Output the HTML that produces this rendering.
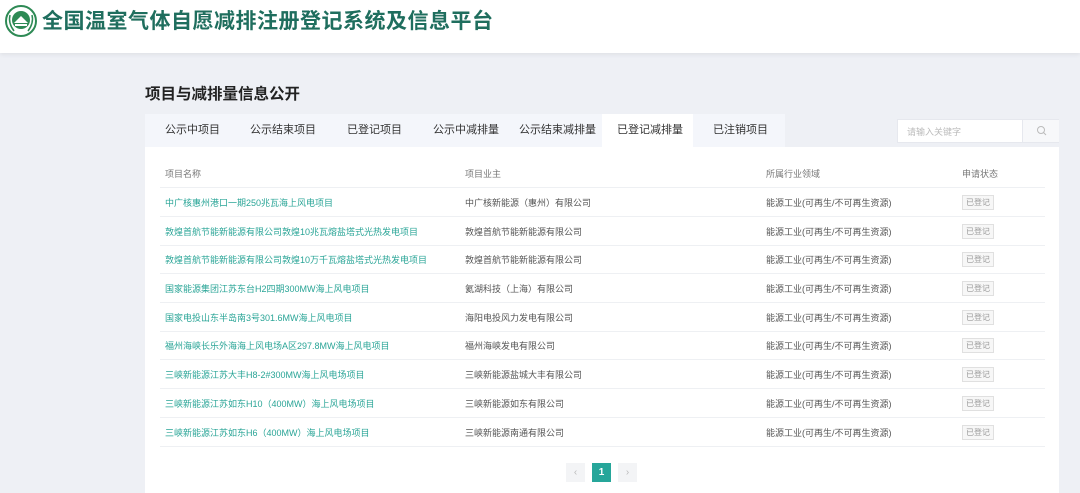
<!DOCTYPE html>
<html><head><meta charset="utf-8"><style>
*{margin:0;padding:0;box-sizing:border-box}
body{width:1080px;height:493px;overflow:hidden;background:#eef0f5;font-family:"Liberation Sans","Noto Sans CJK SC",sans-serif;position:relative}
.hdr{position:absolute;left:0;top:0;width:1080px;height:53px;background:#fff;box-shadow:0 2px 4px rgba(0,0,0,.06)}
.hdr .t{position:absolute;left:42px;top:8px;font-size:21px;font-weight:bold;color:#1f6e5e;letter-spacing:0.5px;line-height:28px}
.title{position:absolute;left:145px;top:82px;font-size:15.5px;font-weight:bold;color:#222}
.tabs{position:absolute;left:145px;top:114px;width:640px;height:33px;background:#f4f6fb}
.tab{position:absolute;top:0;height:33px;line-height:33px;font-size:11px;color:#333}
.tab.act{background:#fff}
.search{position:absolute;left:897px;top:119px;width:162px;height:24px;background:#fff;border:1px solid #e6e8ee}
.search span{position:absolute;left:9px;top:5px;font-size:9px;color:#bbb}
.search .b{position:absolute;left:124px;top:0;width:37px;height:22px;background:#f7f8fa;border-left:1px solid #e6e8ee}
.card{position:absolute;left:145px;top:147px;width:914px;height:346px;background:#fff}
.row{position:absolute;left:15px;width:885px;height:29px;border-bottom:1px solid #eef0f3;font-size:9px;color:#555}
.row div{position:absolute;top:8px;white-space:nowrap}
.c1{left:5px}.c2{left:305px}.c3{left:606px}.c4{left:802px}
.row.h div{color:#777}
.lnk{color:#2aa597}
.tag{border:1px solid #e0e0e0;background:#f7f7f7;color:#999;font-size:8px;padding:1px 3px;top:7px!important}
.pg{position:absolute;top:463px;width:19px;height:19px;background:#f3f4f6;color:#bbb;font-size:10px;text-align:center;line-height:19px}
</style></head><body>
<div class="hdr">
<svg style="position:absolute;left:5px;top:5px" width="32" height="32" viewBox="0 0 32 32"><circle cx="16" cy="16" r="15" fill="#fff" stroke="#2e8a55" stroke-width="2"/><circle cx="16" cy="15" r="9" fill="#2e8a55"/><path d="M9 18 L16 11 L23 18 Z" fill="#fff"/><rect x="10" y="19" width="12" height="2" fill="#fff"/><path d="M5 10 Q3 18 9 26 M27 10 Q29 18 23 26" stroke="#2e8a55" fill="none" stroke-width="1.5"/></svg>
<div class="t">全国温室气体自愿减排注册登记系统及信息平台</div>
</div>
<div class="title">项目与减排量信息公开</div>
<div class="tabs">
<div class="tab" style="left:20px">公示中项目</div>
<div class="tab" style="left:105px">公示结束项目</div>
<div class="tab" style="left:202px">已登记项目</div>
<div class="tab" style="left:288px">公示中减排量</div>
<div class="tab" style="left:374px">公示结束减排量</div>
<div class="tab act" style="left:457px;width:91px;padding-left:15px">已登记减排量</div>
<div class="tab" style="left:568px">已注销项目</div>
</div>
<div class="search"><span>请输入关键字</span><div class="b"><svg style="position:absolute;left:13px;top:5px" width="11" height="11" viewBox="0 0 11 11"><circle cx="5" cy="5" r="3.5" stroke="#bbb" fill="none"/><path d="M7.5 7.5 L10 10" stroke="#bbb"/></svg></div></div>
<div class="card">
<div class="row h" style="top:12px"><div class="c1">项目名称</div><div class="c2">项目业主</div><div class="c3">所属行业领域</div><div class="c4">申请状态</div></div>
<div class="row" style="top:41px"><div class="c1 lnk">中广核惠州港口一期250兆瓦海上风电项目</div><div class="c2">中广核新能源（惠州）有限公司</div><div class="c3">能源工业(可再生/不可再生资源)</div><div class="c4 tag">已登记</div></div>
<div class="row" style="top:70px"><div class="c1 lnk">敦煌首航节能新能源有限公司敦煌10兆瓦熔盐塔式光热发电项目</div><div class="c2">敦煌首航节能新能源有限公司</div><div class="c3">能源工业(可再生/不可再生资源)</div><div class="c4 tag">已登记</div></div>
<div class="row" style="top:98px"><div class="c1 lnk">敦煌首航节能新能源有限公司敦煌10万千瓦熔盐塔式光热发电项目</div><div class="c2">敦煌首航节能新能源有限公司</div><div class="c3">能源工业(可再生/不可再生资源)</div><div class="c4 tag">已登记</div></div>
<div class="row" style="top:127px"><div class="c1 lnk">国家能源集团江苏东台H2四期300MW海上风电项目</div><div class="c2">氦湖科技（上海）有限公司</div><div class="c3">能源工业(可再生/不可再生资源)</div><div class="c4 tag">已登记</div></div>
<div class="row" style="top:156px"><div class="c1 lnk">国家电投山东半岛南3号301.6MW海上风电项目</div><div class="c2">海阳电投风力发电有限公司</div><div class="c3">能源工业(可再生/不可再生资源)</div><div class="c4 tag">已登记</div></div>
<div class="row" style="top:184px"><div class="c1 lnk">福州海峡长乐外海海上风电场A区297.8MW海上风电项目</div><div class="c2">福州海峡发电有限公司</div><div class="c3">能源工业(可再生/不可再生资源)</div><div class="c4 tag">已登记</div></div>
<div class="row" style="top:213px"><div class="c1 lnk">三峡新能源江苏大丰H8-2#300MW海上风电场项目</div><div class="c2">三峡新能源盐城大丰有限公司</div><div class="c3">能源工业(可再生/不可再生资源)</div><div class="c4 tag">已登记</div></div>
<div class="row" style="top:242px"><div class="c1 lnk">三峡新能源江苏如东H10（400MW）海上风电场项目</div><div class="c2">三峡新能源如东有限公司</div><div class="c3">能源工业(可再生/不可再生资源)</div><div class="c4 tag">已登记</div></div>
<div class="row" style="top:271px"><div class="c1 lnk">三峡新能源江苏如东H6（400MW）海上风电场项目</div><div class="c2">三峡新能源南通有限公司</div><div class="c3">能源工业(可再生/不可再生资源)</div><div class="c4 tag">已登记</div></div>
</div>
<div class="pg" style="left:566px">‹</div>
<div class="pg" style="left:592px;background:#26a69a;color:#fff;font-weight:bold">1</div>
<div class="pg" style="left:618px">›</div>
</body></html>
